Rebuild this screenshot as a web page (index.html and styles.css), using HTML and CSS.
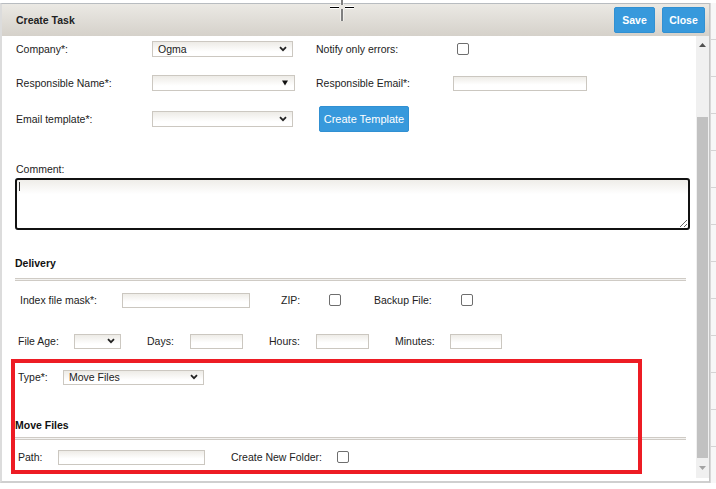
FILE: index.html
```html
<!DOCTYPE html>
<html lang="en">
<head>
    <meta charset="UTF-8">
    <meta name="viewport" content="width=device-width, initial-scale=1.0">
    <title>Create Task</title>
    <link rel="stylesheet" href="styles.css">
</head>
<body>
    <div class="screen">
        <div class="dialog">
            <!-- Header -->
            <div class="dialog-header">
                <span class="dialog-title">Create Task</span>
                <div class="header-buttons">
                    <button type="button" class="btn btn-bold w41">Save</button>
                    <button type="button" class="btn btn-bold w43">Close</button>
                </div>
            </div>

            <div class="dialog-body">
                <div class="content">
                    <!-- General -->
                    <div class="row row-1">
                        <label class="lbl w136">Company*:</label>
                        <div class="select w141"><span>Ogma</span><svg width="8" height="6" viewBox="0 0 8 6"><path d="M1 1.2 L4 4.2 L7 1.2" fill="none" stroke="#222" stroke-width="1.8"/></svg></div>
                        <label class="lbl ml23 w141">Notify only errors:</label>
                        <input type="checkbox" class="check">
                    </div>
                    <div class="row row-2">
                        <label class="lbl w136">Responsible Name*:</label>
                        <div class="select w143"><span></span><svg width="8" height="6" viewBox="0 0 8 6"><polygon points="1,0.5 7,0.5 4,5.5" fill="#111"/></svg></div>
                        <label class="lbl ml21 w137">Responsible Email*:</label>
                        <input type="text" class="field w134">
                    </div>
                    <div class="row row-3">
                        <label class="lbl w136">Email template*:</label>
                        <div class="select w141"><span></span><svg width="8" height="6" viewBox="0 0 8 6"><path d="M1 1.2 L4 4.2 L7 1.2" fill="none" stroke="#222" stroke-width="1.8"/></svg></div>
                        <button type="button" class="btn btn-create">Create Template</button>
                    </div>

                    <div class="comment-label">Comment:</div>
                    <div class="comment-wrap">
                        <textarea class="comment"></textarea>
                        <span class="caret"></span>
                    </div>

                    <!-- Delivery -->
                    <div class="section-title delivery-title">Delivery</div>
                    <div class="divider divider-delivery"></div>

                    <div class="row row-index">
                        <label class="lbl w102">Index file mask*:</label>
                        <input type="text" class="field w128">
                        <label class="lbl ml31 w48">ZIP:</label>
                        <input type="checkbox" class="check">
                        <label class="lbl ml33 w87">Backup File:</label>
                        <input type="checkbox" class="check">
                    </div>
                    <div class="row row-age">
                        <label class="lbl w56">File Age:</label>
                        <div class="select w47"><span></span><svg width="8" height="6" viewBox="0 0 8 6"><path d="M1 1.2 L4 4.2 L7 1.2" fill="none" stroke="#222" stroke-width="1.8"/></svg></div>
                        <label class="lbl ml26 w43">Days:</label>
                        <input type="text" class="field w53">
                        <label class="lbl ml26 w47">Hours:</label>
                        <input type="text" class="field w53">
                        <label class="lbl ml26 w55">Minutes:</label>
                        <input type="text" class="field w52">
                    </div>
                    <div class="row row-type">
                        <label class="lbl w45">Type*:</label>
                        <div class="select w141"><span>Move Files</span><svg width="8" height="6" viewBox="0 0 8 6"><path d="M1 1.2 L4 4.2 L7 1.2" fill="none" stroke="#222" stroke-width="1.8"/></svg></div>
                    </div>

                    <!-- Move Files -->
                    <div class="section-title move-title">Move Files</div>
                    <div class="divider divider-move"></div>

                    <div class="row row-path">
                        <label class="lbl w40">Path:</label>
                        <input type="text" class="field w147">
                        <label class="lbl ml26 w106">Create New Folder:</label>
                        <input type="checkbox" class="check">
                    </div>

                    <!-- Annotation box -->
                    <div class="highlight"></div>
                </div>

                <div class="scrollbar">
                    <div class="sb-button sb-up">
                        <svg width="7" height="4" viewBox="0 0 7 4"><polygon points="0,4 7,4 3.5,0" fill="#505050"/></svg>
                    </div>
                    <div class="sb-track"></div>
                    <div class="sb-thumb"></div>
                    <div class="sb-button sb-down">
                        <svg width="7" height="4" viewBox="0 0 7 4"><polygon points="0,0 7,0 3.5,4" fill="#a3a3a3"/></svg>
                    </div>
                </div>
            </div>
        </div>
        <div class="backdrop-edge"></div>
    </div>

    <!-- Mouse pointer (crosshair) -->
    <svg class="pointer" width="26" height="22" viewBox="0 0 26 22">
        <g stroke="#fff" stroke-width="3">
            <path d="M13 0 V5 M13 9 V21 M1 7.5 H10 M16 7.5 H25"/>
        </g>
        <g stroke="#000" stroke-width="1">
            <path d="M13 0 V5 M13 9 V21 M1 7.5 H10 M16 7.5 H25"/>
        </g>
    </svg>
</body>
</html>
```

FILE: styles.css
```css
/* General */
* {
    margin: 0;
    padding: 0;
    box-sizing: border-box;
}

body {
    position: relative;
    font-family: 'Liberation Sans', Arial, sans-serif;
    font-size: 10.5px;
    color: #222;
    background: #fff;
}

.screen {
    display: flex;
    padding-top: 3px;
}

/* Dialog */
.dialog {
    width: 710px;
    border-top: 1px solid #b8bcc0;
    border-left: 2px solid #dcdcdc;
    border-right: 1px solid #c4c4c4;
    border-bottom: 2px solid #cfcfcf;
}

.dialog-header {
    height: 32px;
    display: flex;
    align-items: center;
    justify-content: space-between;
    padding: 0 4px 0 14px;
    background: linear-gradient(#ebe9e4, #d5d1ca);
}

.dialog-title {
    font-weight: bold;
    color: #222;
}

.header-buttons {
    display: flex;
    gap: 7px;
}

.btn {
    height: 26px;
    background: #3799dc;
    border: 1px solid #3190d2;
    border-radius: 2px;
    color: #fff;
    font-family: inherit;
    font-size: 10.5px;
}

.btn-bold {
    font-weight: bold;
}

.btn-create {
    width: 90px;
    margin-left: 26px;
    font-size: 11px;
}

.dialog-body {
    display: flex;
    height: 442px;
}

.content {
    position: relative;
    width: 694px;
    background: #fff;
}

/* Rows */
.row {
    display: flex;
    align-items: center;
    height: 26px;
    padding-left: 16px;
}

.row-1 { padding-left: 14px; }
.row-2 { padding-left: 14px; margin-top: 8px; }
.row-3 { padding-left: 14px; margin-top: 10px; }
.row-index { padding-left: 18px; margin-top: 6px; }
.row-age { margin-top: 15px; }
.row-type { margin-top: 10px; }
.row-path { margin-top: 4px; }

.lbl {
    flex: none;
    white-space: nowrap;
}

.select {
    flex: none;
    height: 16px;
    display: flex;
    align-items: center;
    justify-content: space-between;
    padding: 0 5px 0 4px;
    border: 1px solid #ccc8c1;
    background: linear-gradient(#edebe6, #fff 70%);
    color: #222;
}

.select span {
    padding-left: 1px;
}

.row-age .select,
.row-type .select {
    height: 15px;
}

.field {
    flex: none;
    height: 15px;
    border: 1px solid #cbc7c0;
    background: linear-gradient(#eeece7, #fff 60%);
    outline: none;
}

.check {
    appearance: none;
    flex: none;
    width: 12px;
    height: 12px;
    border: 1px solid #6e6e6e;
    border-radius: 2px;
    background: #fff;
}

/* widths */
.w40 { width: 40px; }
.w41 { width: 41px; }
.w43 { width: 43px; }
.w45 { width: 45px; }
.w47 { width: 47px; }
.w48 { width: 48px; }
.w52 { width: 52px; }
.w53 { width: 53px; }
.w55 { width: 55px; }
.w56 { width: 56px; }
.w87 { width: 87px; }
.w102 { width: 102px; }
.w106 { width: 106px; }
.w128 { width: 128px; }
.w134 { width: 134px; }
.w136 { width: 136px; }
.w137 { width: 137px; }
.w141 { width: 141px; }
.w143 { width: 143px; }
.w147 { width: 147px; }

.ml21 { margin-left: 21px; }
.ml23 { margin-left: 23px; }
.ml26 { margin-left: 26px; }
.ml31 { margin-left: 31px; }
.ml33 { margin-left: 33px; }

/* Comment */
.comment-label {
    margin-top: 30px;
    padding-left: 14px;
    line-height: 14px;
}

.comment-wrap {
    position: relative;
    width: 675px;
    margin: 2px 0 0 13px;
}

.comment {
    display: block;
    width: 675px;
    height: 52px;
    border: 2px solid #111;
    border-radius: 3px;
    background: linear-gradient(#efede9, #fff 30%);
    outline: none;
    font-family: inherit;
    font-size: 10.5px;
    padding: 2px 3px;
}

.caret {
    position: absolute;
    left: 4px;
    top: 4px;
    width: 1px;
    height: 9px;
    background: #333;
}

/* Sections */
.section-title {
    padding-left: 13px;
    line-height: 14px;
    font-weight: bold;
    color: #111;
}

.delivery-title { margin-top: 26px; }
.move-title { margin-top: 28px; }

.divider {
    width: 671px;
    height: 3px;
    margin-left: 13px;
    border-top: 1px solid #cfcbc5;
    border-bottom: 1px solid #cfcbc5;
    background: #f3f2f0;
}

.divider-delivery { margin-top: 8px; }
.divider-move { margin-top: 5px; }

/* Red annotation box */
.highlight {
    position: absolute;
    left: 9px;
    top: 323px;
    width: 631px;
    height: 115px;
    border: 4px solid #ed1c24;
    pointer-events: none;
}

/* Scrollbar */
.scrollbar {
    width: 13px;
    display: flex;
    flex-direction: column;
    background: #f0f0f0;
}

.sb-button {
    display: flex;
    justify-content: center;
}

.sb-up {
    height: 17px;
    padding-top: 7px;
}

.sb-track {
    height: 64px;
}

.sb-thumb {
    height: 341px;
    margin: 0 1px;
    background: #c1c1c1;
}

.sb-down {
    height: 20px;
    padding-top: 8px;
}

/* Page behind the dialog */
.backdrop-edge {
    flex: 1;
    height: 480px;
    border-left: 1px solid #d8d8d8;
    background: repeating-linear-gradient(#f7f7f7 0, #f7f7f7 36px, #d4d4d4 36px, #d4d4d4 37px);
}

.pointer {
    position: absolute;
    left: 329px;
    top: 0;
}
```
